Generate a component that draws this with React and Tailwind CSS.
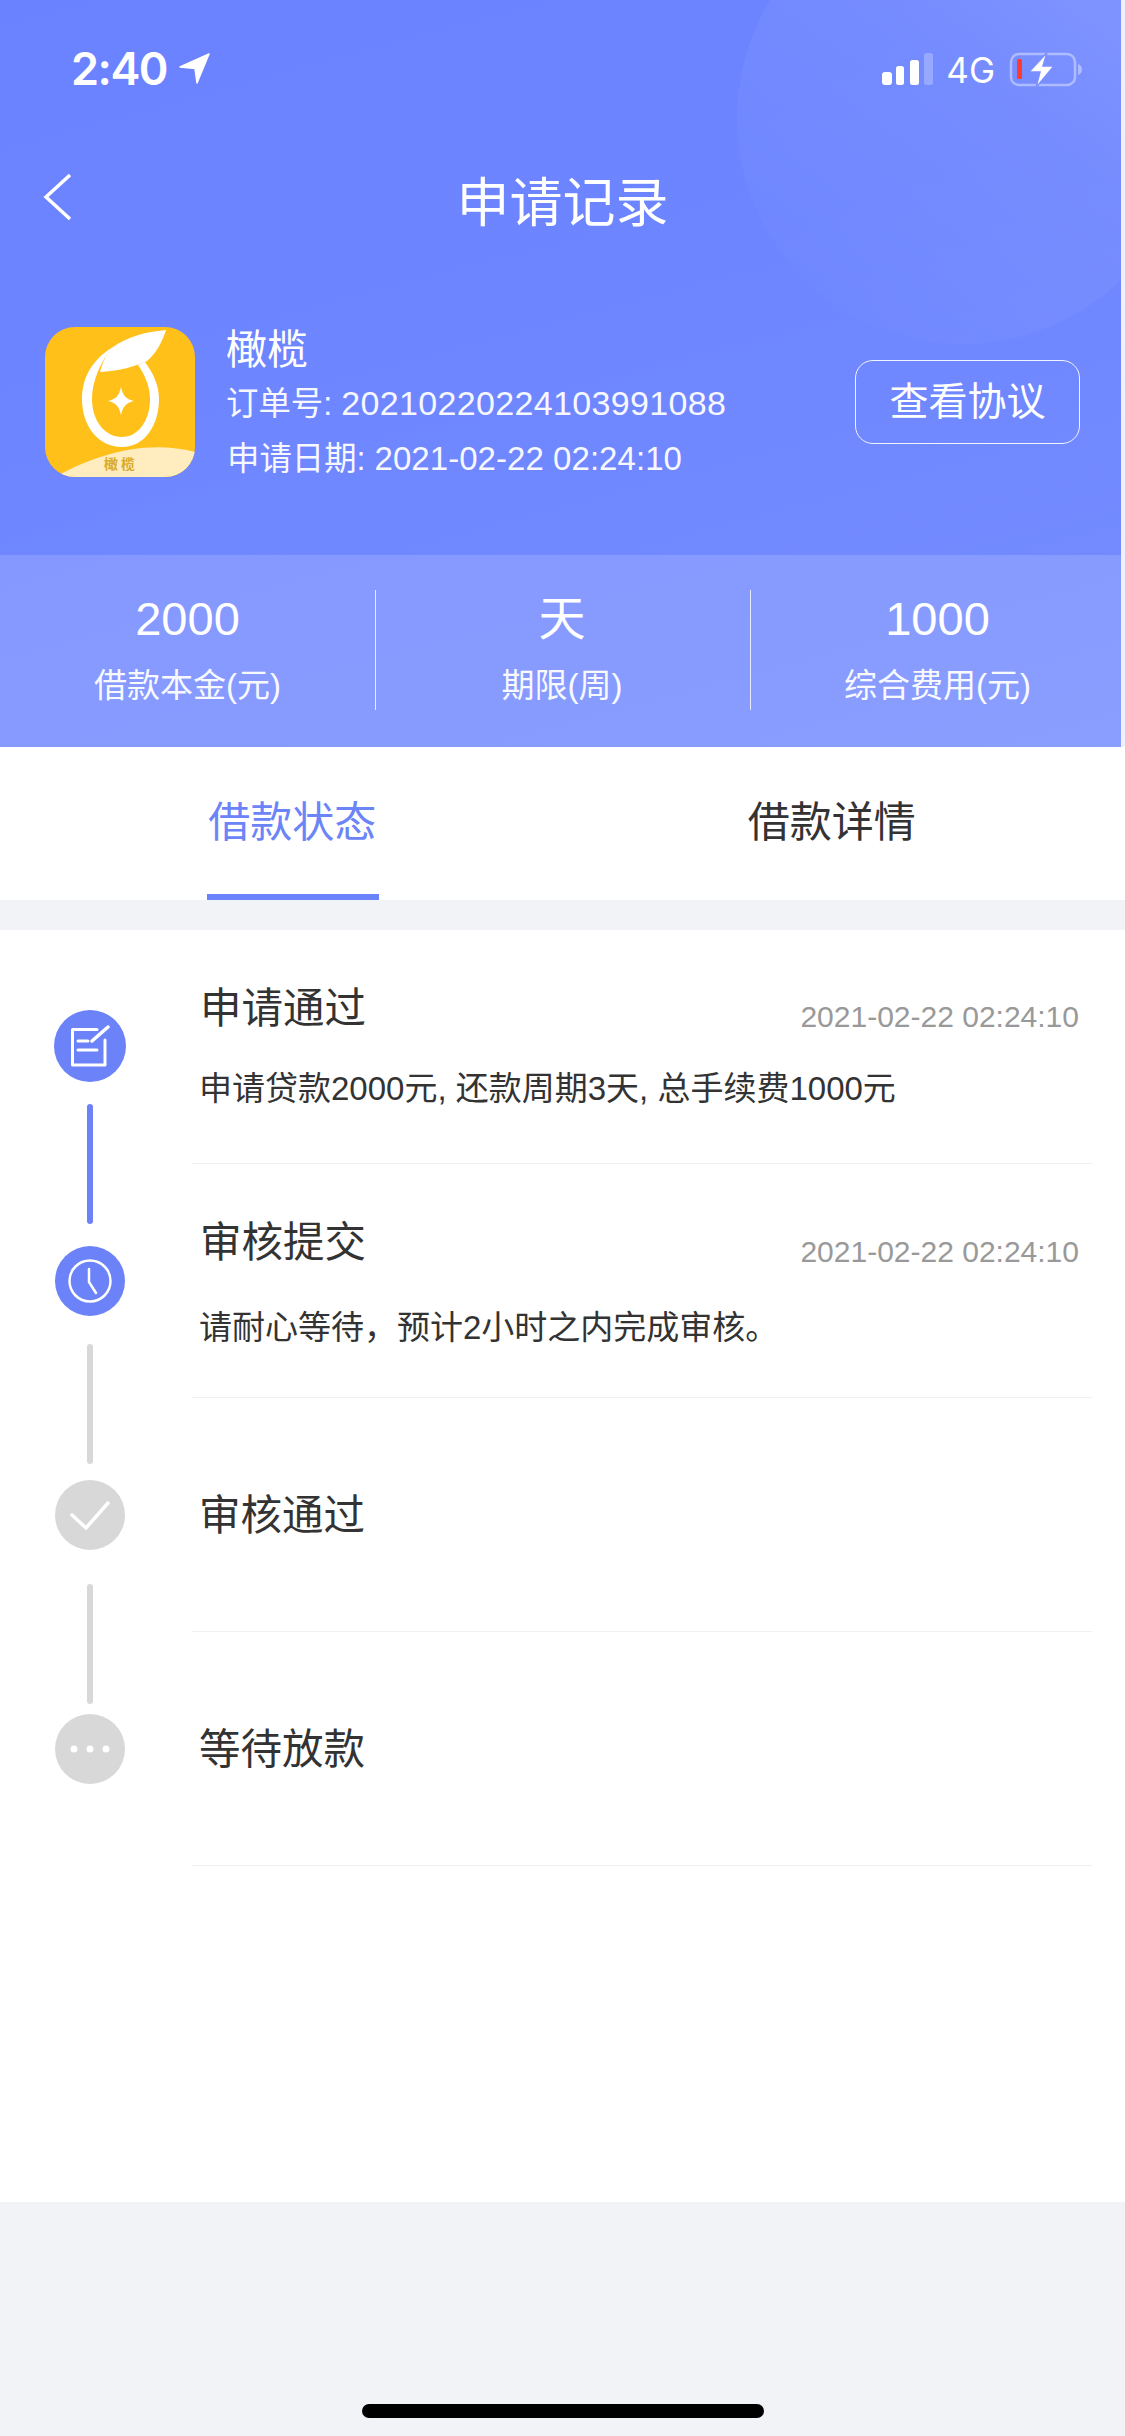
import React from "react";

const cjk = { fontFamily: '"Liberation Sans","Noto Sans CJK SC",sans-serif' };

function AppIcon() {
  return (
    <svg width="150" height="150" viewBox="0 0 150 150" className="block">
      <defs><clipPath id="ic"><rect width="150" height="150" rx="30" /></clipPath></defs>
      <g clipPath="url(#ic)">
        <rect width="150" height="150" fill="#ffc01a" />
        <path d="M10 150 C50 128 100 112 150 125 V150 Z" fill="#ffedbf" />
        <path d="M68 20 C48 32 37 50 37 72 C37 100 54 120 77 120 C100 120 114 98 114 72 C114 58 108 46 100 35 L93 38 C100 48 105 60 105 72 C105 94 93 110 77 110 C60 110 47 94 47 72 C47 55 55 35 68 20 Z" fill="#fff" />
        <path d="M121 3 C100 5 82 10 68 20 C60 28 57 38 55 45 C72 44 90 40 102 34 C111 27 118 13 121 3 Z" fill="#fff" />
        <path d="M76 60 C78 69 81 72 89 74 C81 76 78 79 76 88 C74 79 71 76 63 74 C71 72 74 69 76 60 Z" fill="#fff" />
        <text x="76" y="142" textAnchor="middle" fontSize="14" fontWeight="700" fill="#d9ab2c" letterSpacing="3" fontFamily='"Noto Sans CJK SC",sans-serif'>橄榄</text>
      </g>
    </svg>
  );
}

function StatusBar() {
  return (
    <div className="relative flex h-[136px] items-start justify-between pl-[71px] pr-[36px] pt-[46px] text-white">
      <div className="flex items-start">
        <span className="text-[45px] leading-[46px] font-semibold tracking-[-1.5px]" style={{ fontFamily: "Inter, sans-serif" }}>2:40</span>
        <svg width="32" height="32" viewBox="0 0 32 32" className="ml-[12px] mt-[7px]">
          <path d="M30 1 L1 14 L16 15.5 L18 30 Z" fill="#fff" stroke="#fff" strokeWidth="1.5" strokeLinejoin="round" />
        </svg>
      </div>
      <div className="flex items-start pt-[7px]">
        <svg width="51" height="32" viewBox="0 0 51 32" className="block">
          <rect x="0" y="19" width="10" height="13" rx="3" fill="#fff" />
          <rect x="14" y="13" width="8" height="19" rx="2.5" fill="#fff" />
          <rect x="28" y="7" width="9" height="25" rx="2.5" fill="#fff" />
          <rect x="42" y="0" width="9" height="32" rx="2.5" fill="#fff" fillOpacity="0.25" />
        </svg>
        <span className="ml-[13px] -mt-[3px] text-[35px] leading-[40px]" style={{ fontFamily: "Inter, sans-serif" }}>4G</span>
        <svg width="76" height="36" viewBox="0 0 76 36" className="ml-[14px] -mt-[1px] block">
          <rect x="2" y="2" width="64" height="31" rx="8" fill="none" stroke="#fff" strokeOpacity="0.4" strokeWidth="2.5" />
          <path d="M69 12 C72 13 73 15 73 17.5 C73 20 72 22 69 23 Z" fill="#fff" fillOpacity="0.4" />
          <rect x="8" y="7" width="5" height="20" rx="1.5" fill="#ff3b30" />
          <path d="M38 0.5 L20 20 L31 20 L27 35.5 L45 14 L34 14 Z" fill="#fff" stroke="#7c90ff" strokeWidth="1.5" />
        </svg>
      </div>
    </div>
  );
}

function Header() {
  return (
    <header className="h-[747px] bg-[#eef1fd] text-white" style={cjk}>
      <div className="relative h-[747px] w-[1121px] overflow-hidden bg-[linear-gradient(165deg,#6a82ff_0%,#6d85ff_40%,#768dff_100%)]">
        <div className="absolute left-[737px] top-[-108px] h-[452px] w-[452px] rounded-full bg-[linear-gradient(35deg,rgba(255,255,255,0),rgba(255,255,255,0.06)_55%,rgba(255,255,255,0.19))]" />
        <div className="relative">
          <StatusBar />
          <div className="relative mt-[32px] flex h-[72px] items-center justify-center pl-[4px]">
            <svg width="30" height="50" viewBox="0 0 30 50" className="absolute left-[43px] top-[4px]">
              <path d="M27 3 L3 25 L27 47" fill="none" stroke="#fff" strokeWidth="3.5" />
            </svg>
            <h1 className="text-[53px] leading-[72px] font-normal">申请记录</h1>
          </div>
          <div className="mt-[87px] flex h-[150px] items-start pl-[45px] pr-[41px]">
            <AppIcon />
            <div className="ml-[31px] flex-1">
              <div className="text-[41px] leading-[46px]">橄榄</div>
              <div className="mt-[7px] h-[46px] leading-[46px] opacity-95">
                <span className="text-[32.4px]">订单号: </span>
                <span className="text-[34px] tracking-[0.35px]">20210220224103991088</span>
              </div>
              <div className="mt-[10px] ml-[1px] h-[46px] leading-[46px] opacity-95">
                <span className="text-[32.4px]">申请日期: </span>
                <span className="text-[33px] tracking-[0.05px]">2021-02-22 02:24:10</span>
              </div>
            </div>
            <div className="mt-[33px] flex h-[84px] w-[225px] items-center justify-center rounded-[18px] border-[1.5px] border-white/90 text-[39px]">查看协议</div>
          </div>
        </div>
        <div className="absolute inset-x-0 bottom-0 grid h-[192px] grid-cols-[376px_375px_1fr] bg-white/[0.15] pt-[35px]">
          {[["2000", "借款本金(元)", ""], ["天", "期限(周)", "pr-[2px]"], ["1000", "综合费用(元)", "pl-[3px]"]].map(([a, b, pad], i) => (
            <div key={b} className={`flex h-[120px] flex-col items-center ${pad} ${i < 2 ? "border-r border-white/80" : ""}`}>
              <div className="-mt-[1px] text-[47px] leading-[60px]">{a}</div>
              <div className="mt-[15px] text-[33px] leading-[44px] opacity-95">{b}</div>
            </div>
          ))}
        </div>
      </div>
    </header>
  );
}

function Tabs() {
  return (
    <nav className="grid h-[153px] grid-cols-2 bg-white" style={cjk}>
      <div className="relative flex items-start justify-center pl-[22px] pt-[46px]">
        <span className="text-[42px] leading-[60px] text-[#6b84f8]">借款状态</span>
        <div className="absolute bottom-0 left-[207px] h-[6px] w-[172px] bg-[#6b82fb]" />
      </div>
      <div className="flex items-start justify-center pt-[46px]">
        <span className="-ml-[24px] text-[42px] leading-[60px] text-[#333]">借款详情</span>
      </div>
    </nav>
  );
}

function Circle({ on, big, children, className = "" }) {
  return (
    <div className={`flex items-center justify-center rounded-full ${big ? "h-[72px] w-[72px]" : "h-[70px] w-[70px]"} ${on ? "bg-[#6b82f8]" : "bg-[#d8d8d8]"} ${className}`}>
      {children}
    </div>
  );
}

function Bar({ on, className = "" }) {
  return <div className={`h-[120px] w-[6px] rounded-full ${on ? "bg-[#6b82f8]" : "bg-[#d8d8d8]"} ${className}`} />;
}

function Timeline() {
  return (
    <section className="flex h-[1272px] bg-white" style={cjk}>
      <div className="flex w-[192px] flex-col items-center pr-[12px] pt-[80px]">
        <Circle on big>
          <svg width="42" height="42" viewBox="0 0 42 42" fill="none" stroke="#fff" strokeWidth="3" strokeLinecap="round" strokeLinejoin="round">
            <path d="M28 4.5 H3.5 V40 H36 V15" />
            <path d="M23 16 L39 2" strokeWidth="3.5" />
            <path d="M9 16 H19 M9 25 H28" />
          </svg>
        </Circle>
        <Bar on className="mt-[22px]" />
        <Circle on className="mt-[22px]">
          <svg width="44" height="44" viewBox="0 0 44 44" fill="none" stroke="#fff" strokeWidth="2.5" strokeLinecap="round" strokeLinejoin="round">
            <circle cx="22" cy="22" r="20.5" />
            <path d="M21 10 V23 L28 34" />
          </svg>
        </Circle>
        <Bar className="mt-[28px]" />
        <Circle className="mt-[16px]">
          <svg width="42" height="30" viewBox="0 0 42 30" fill="none" stroke="#fff" strokeWidth="3.5" strokeLinecap="round" strokeLinejoin="round">
            <path d="M3 15 L17 28 L39 3" />
          </svg>
        </Circle>
        <Bar className="mt-[34px]" />
        <Circle className="mt-[10px]">
          <svg width="42" height="10" viewBox="0 0 42 10" fill="#fff">
            <circle cx="5" cy="5" r="3.5" /><circle cx="21" cy="5" r="3.5" /><circle cx="37" cy="5" r="3.5" />
          </svg>
        </Circle>
      </div>
      <div className="w-[900px]">
        <Row title="申请通过" time detail="申请贷款2000元, 还款周期3天, 总手续费1000元" />
        <Row title="审核提交" time detail="请耐心等待，预计2小时之内完成审核。" second />
        <Row title="审核通过" />
        <Row title="等待放款" />
      </div>
    </section>
  );
}

function Row({ title, time, detail, second }) {
  if (!time) {
    return (
      <div className="flex h-[234px] items-start border-b border-[#f0f0f0] pl-[7px] pt-[88px]">
        <span className="text-[41.5px] leading-[60px] text-[#333]">{title}</span>
      </div>
    );
  }
  return (
    <div className="h-[234px] border-b border-[#f0f0f0] pl-[8px] pt-[49px]">
      <div className="flex items-start justify-between pr-[13px]">
        <span className="text-[41.5px] leading-[60px] text-[#333]">{title}</span>
        <span className={`${second ? "mt-[21px]" : "mt-[20px]"} text-[30px] leading-[36px] text-[#999]`}>2021-02-22 02:24:10</span>
      </div>
      <div className={`-ml-[1px] ${second ? "mt-[33px]" : "mt-[28px]"} text-[33px] leading-[44px] text-[#333]`}>{detail}</div>
    </div>
  );
}

export default function App() {
  return (
    <div className="flex h-[2436px] w-[1125px] flex-col overflow-hidden bg-[#f2f3f7]">
      <Header />
      <Tabs />
      <div className="h-[30px]" />
      <Timeline />
      <div className="mt-[202px] ml-[362px] h-[14px] w-[402px] rounded-full bg-black" />
    </div>
  );
}
